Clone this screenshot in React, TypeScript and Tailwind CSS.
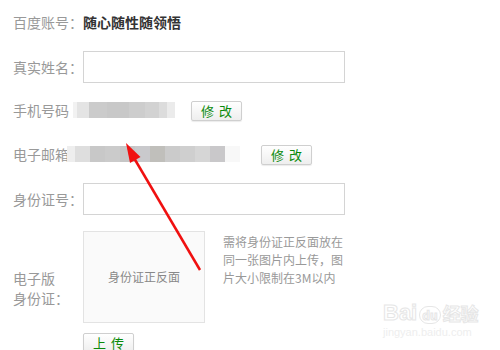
import React from 'react';

const font = { fontFamily: '"Microsoft YaHei", "Noto Sans CJK SC", "Liberation Sans", sans-serif' };

const Blur = ({ shades }: { shades: [number, string][] }) => (
  <div className="flex h-[16px]">
    {shades.map(([w, c], i) => (
      <div key={i} style={{ width: w, backgroundColor: c }} />
    ))}
  </div>
);

const Btn = ({ text }: { text: string }) => (
  <button className="h-[20px] w-[51px] rounded-[2px] border border-[#cfcfcf] bg-gradient-to-b from-white to-[#eeeeee] text-[13px] leading-[18px] tracking-[5px] pl-[5px] text-[#0a8a0a] shadow-[0_1px_1px_rgba(0,0,0,0.08)]">
    {text}
  </button>
);

export default function App() {
  return (
    <div className="relative w-[500px] h-[350px] overflow-hidden bg-white" style={font}>
      <div className="flex flex-col pl-[13px] pt-[12px] text-[14px] text-[#999]">
        <div className="flex h-[20px] items-center">
          <span className="w-[70px]">百度账号：</span>
          <span className="font-bold text-[#333]">随心随性随领悟</span>
        </div>

        <div className="mt-[19px] flex h-[32px] items-center">
          <span className="w-[70px]">真实姓名：</span>
          <div className="h-[32px] w-[262px] border border-[#d4d4d4]" />
        </div>

        <div className="mt-[17px] flex h-[20px] items-center">
          <span>手机号码</span>
          <div className="ml-[4px]">
            <Blur
              shades={[
                [4, '#f2f2f2'],
                [12, '#e4e4e4'],
                [18, '#cbcbcb'],
                [22, '#c8c8c8'],
                [16, '#cdcdcd'],
                [14, '#d2d2d2'],
                [8, '#dcdcdc'],
                [8, '#ebebeb'],
              ]}
            />
          </div>
          <div className="ml-[16px]">
            <Btn text="修改" />
          </div>
        </div>

        <div className="mt-[24px] flex h-[20px] items-center">
          <span>电子邮箱</span>
          <div className="-ml-[2px]">
            <Blur
              shades={[
                [8, '#eeeeee'],
                [15, '#dedede'],
                [15, '#c8c8c8'],
                [15, '#cbcbcb'],
                [15, '#c6c6c6'],
                [15, '#c9c9cc'],
                [15, '#c0bfbb'],
                [15, '#cbcbcb'],
                [15, '#cfcfcf'],
                [15, '#d6d6d6'],
                [15, '#c9c8ca'],
                [15, '#f8f8f8'],
              ]}
            />
          </div>
          <div className="ml-[21px]">
            <Btn text="修改" />
          </div>
        </div>

        <div className="mt-[19px] flex h-[32px] items-center">
          <span className="w-[70px]">身份证号：</span>
          <div className="h-[32px] w-[262px] border border-[#d4d4d4]" />
        </div>

        <div className="mt-[16px] flex">
          <div className="flex w-[70px] flex-col pt-[37px] leading-[20px]">
            <span>电子版</span>
            <span>身份证：</span>
          </div>
          <div className="flex flex-col">
            <div className="flex h-[92px] w-[122px] items-center justify-center border border-[#e3e3e3] bg-[#fafafa] text-[12px] text-[#888]">
              身份证正反面
            </div>
            <div className="mt-[9px]">
              <Btn text="上传" />
            </div>
          </div>
          <div className="ml-[18px] w-[124px] pt-[2px] text-[12px] leading-[18px] text-[#999]">
            需将身份证正反面放在同一张图片内上传，图片大小限制在3M以内
          </div>
        </div>
      </div>

      <div className="absolute left-[383px] top-[302px] flex flex-col items-start text-white">
        <div className="flex items-end gap-[2px] [-webkit-text-stroke:1px_#e6e6e6]">
          <span className="text-[22px] font-bold leading-[22px]" style={{ fontFamily: '"Liberation Sans", sans-serif' }}>
            Bai
          </span>
          <span className="rounded-full border border-[#e6e6e6] px-[2px] text-[12px] font-bold leading-[16px]">du</span>
          <span className="text-[18px] font-bold leading-[22px]">经验</span>
        </div>
        <span className="mt-[2px] text-[11px] leading-[13px] text-[#eeeeee]" style={{ fontFamily: '"Liberation Sans", sans-serif' }}>
          jingyan.baidu.com
        </span>
      </div>

      <svg className="pointer-events-none absolute left-0 top-0" width="500" height="350">
        <line x1="200" y1="270" x2="134" y2="158" stroke="#f01010" strokeWidth="2.5" />
        <polygon points="126,143 140.5,157 130,163" fill="#f01010" />
      </svg>
    </div>
  );
}
